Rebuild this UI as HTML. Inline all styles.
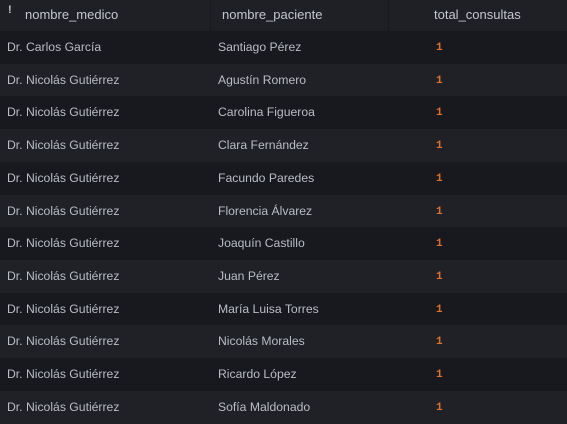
<!DOCTYPE html><html><head><style>
html,body{margin:0;background:#1f2126;width:567px;height:416px;overflow:hidden;font-family:"Liberation Sans",sans-serif;font-size:12px;color:#b9bdc4}
.h{position:absolute;top:0;left:0;width:567px;height:31px;background:#1e2025}
.h span{position:absolute;top:7px;font-size:13px;color:#c3c7ce}
.sep{position:absolute;top:0;width:1px;height:31px;background:#17191d}
.r{position:absolute;left:0;width:567px;height:33px}
.r span{position:absolute;top:9px;font-size:12.2px}
.n{color:#e0702a;font-family:"Liberation Mono",monospace;font-weight:bold;font-size:11px!important;top:11px!important}
</style></head><body>
<div class="h"><span style="left:8px;top:4px;font-weight:bold;font-size:11px">!</span><span style="left:25px">nombre_medico</span><div class="sep" style="left:210px"></div><span style="left:222px">nombre_paciente</span><div class="sep" style="left:388px"></div><span style="left:434px">total_consultas</span></div>
<div id="rows"></div>
<script>
var d=[["Dr. Carlos García","Santiago Pérez"],["Dr. Nicolás Gutiérrez","Agustín Romero"],["Dr. Nicolás Gutiérrez","Carolina Figueroa"],["Dr. Nicolás Gutiérrez","Clara Fernández"],["Dr. Nicolás Gutiérrez","Facundo Paredes"],["Dr. Nicolás Gutiérrez","Florencia Álvarez"],["Dr. Nicolás Gutiérrez","Joaquín Castillo"],["Dr. Nicolás Gutiérrez","Juan Pérez"],["Dr. Nicolás Gutiérrez","María Luisa Torres"],["Dr. Nicolás Gutiérrez","Nicolás Morales"],["Dr. Nicolás Gutiérrez","Ricardo López"],["Dr. Nicolás Gutiérrez","Sofía Maldonado"]];
var h="";d.forEach(function(x,i){var t=31+i*32.7;h+='<div class="r" style="top:'+t+'px;background:'+(i%2?'#1f2126':'#18191e')+'"><span style="left:7px">'+x[0]+'</span><span style="left:218px">'+x[1]+'</span><span class="n" style="left:436px">1</span></div>'});
document.getElementById("rows").innerHTML=h;
</script>
</body></html>
